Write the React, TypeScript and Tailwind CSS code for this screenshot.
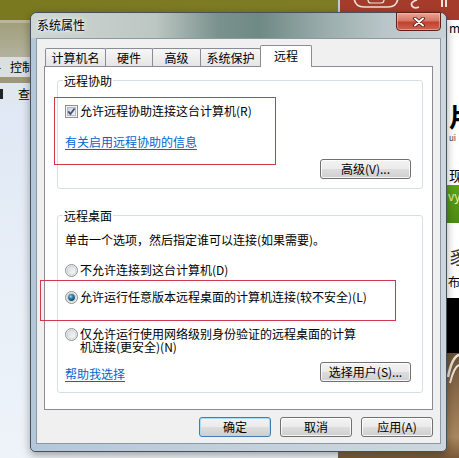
import React from "react";

function Checkbox() {
  return (
    <svg width="13" height="13" viewBox="0 0 13 13" className="shrink-0">
      <defs>
        <linearGradient id="cbg" x1="0" y1="0" x2="1" y2="1">
          <stop offset="0" stopColor="#cbcfd5" />
          <stop offset="1" stopColor="#f6f6f6" />
        </linearGradient>
      </defs>
      <rect x="0.5" y="0.5" width="12" height="12" fill="#f4f4f4" stroke="#8e8f8f" />
      <rect x="2.5" y="2.5" width="8" height="8" fill="url(#cbg)" stroke="#b4bac2" />
      <path d="M3.3 6.4 L5.4 9 L9.6 3.4" stroke="#3f4f7a" strokeWidth="1.7" fill="none" />
    </svg>
  );
}

function Radio({ checked }: { checked?: boolean }) {
  return (
    <svg width="13" height="13" viewBox="0 0 13 13" className="shrink-0">
      <defs>
        <linearGradient id="rbg" x1="0" y1="0" x2="1" y2="1">
          <stop offset="0" stopColor="#d6d8da" />
          <stop offset="1" stopColor="#fbfbfb" />
        </linearGradient>
        <radialGradient id="rdot" cx="0.4" cy="0.35" r="0.7">
          <stop offset="0" stopColor="#9fdcf4" />
          <stop offset="0.45" stopColor="#2b7ea6" />
          <stop offset="1" stopColor="#0c3d58" />
        </radialGradient>
      </defs>
      <circle cx="6.5" cy="6.5" r="6" fill="#f3f3f3" stroke="#8c8e90" />
      <circle cx="6.5" cy="6.5" r="4.4" fill="url(#rbg)" stroke="#c2c6ca" strokeWidth="0.8" />
      {checked && <circle cx="6.5" cy="6.5" r="3.4" fill="url(#rdot)" />}
    </svg>
  );
}

const btnBase =
  "h-[20px] rounded-[3px] border text-center leading-[18px] bg-[linear-gradient(to_bottom,#f3f3f3_0%,#ebebeb_48%,#dddddd_52%,#cfcfcf_100%)]";
const btnNormal = btnBase + " border-[#707070] shadow-[inset_0_0_0_1px_rgba(255,255,255,0.8)]";
const btnFocus = btnBase + " border-[#3c7fb1] shadow-[inset_0_0_0_1px_#a6def6]";

function Group({ title, children }: { title: string; children: React.ReactNode }) {
  return (
    <div className="relative rounded-[3px] border border-[#d5dfe5]">
      <span className="absolute left-[5px] top-[-7px] bg-white px-px leading-[14px]">{title}</span>
      {children}
    </div>
  );
}

export default function App() {
  return (
    <div className="relative h-[458px] w-[459px] overflow-hidden text-[12px] text-black [font-family:'Noto_Sans_CJK_SC','Noto_Sans',sans-serif]">
      {/* desktop background */}
      <div className="flex h-full">
        <div className="flex w-[338px] flex-col">
          <div className="h-[20px] bg-[linear-gradient(to_right,#7a7920,#7e7c24)]" />
          <div className="h-[3px] bg-[#b8b79a]" />
          <div className="h-[34px] bg-[linear-gradient(to_bottom,#a19f7b,#b3b29e)]" />
          <div className="flex h-[20px] items-center bg-[#dcdfdf] leading-[14px]">
            <span className="ml-[-4px] text-[10px]">▸</span>
            <span className="ml-[9px]">控制面板</span>
          </div>
          <div className="h-[6px] bg-[#9c9878]" />
          <div className="flex h-[21px] items-center bg-[#e0e7ef] leading-[14px]">
            <span className="ml-[-6px] h-[10px] w-[9px] bg-[#222]" />
            <span className="ml-[15px]">查看</span>
          </div>
          <div className="flex-1 bg-[linear-gradient(to_bottom,#dfe8f4,#e9f0f8_60%,#eef3f9)]" />
        </div>
        <div className="flex w-[121px] flex-col bg-white">
          <div className="h-[20px] border-l-2 border-[#b5cde0] bg-[#a53c2b]">
            <svg width="119" height="20" viewBox="0 0 119 20">
              <path d="M14 -4 Q14 7 24 7 L48 7 Q58 7 58 -4" stroke="#f3e0da" strokeWidth="1.6" fill="none" />
              <path d="M28 0 Q28 3 31 3 L41 3 Q44 3 44 0" stroke="#f3e0da" strokeWidth="1.2" fill="none" />
              <path d="M77 0 Q70 2 72 6 Q74 9 79 7" stroke="#f3e0da" strokeWidth="1.8" fill="none" />
              <rect x="101" y="0" width="2" height="7" fill="#f3e0da" />
              <rect x="105" y="0" width="2" height="7" fill="#f3e0da" />
            </svg>
          </div>
          <div className="flex h-[165px] flex-col overflow-hidden bg-white pl-[111px]">
            <span className="mt-[2px] h-[12px] text-[12px] leading-[12px]">mp</span>
            <span className="mt-[68px] h-[28px] text-[26px] font-bold leading-[28px]">片</span>
            <span className="mt-[4px] h-[8px] text-[8px] leading-[8px] text-[#444]">ui</span>
            <span className="mt-[25px] h-[16px] text-[14px] leading-[16px]">现</span>
          </div>
          <div className="h-[38px] overflow-hidden bg-[linear-gradient(to_bottom,#5fa11d,#4b8c12)] pl-[110px] pt-[4px] text-[12px] leading-[14px] text-[#e8f0a0]">
            vy
          </div>
          <div className="flex h-[75px] flex-col overflow-hidden bg-white pl-[110px]">
            <span className="mt-[23px] h-[20px] text-[18px] leading-[20px] text-[#333]">豸</span>
            <span className="mt-[10px] h-[12px] text-[12px] leading-[12px]">布</span>
          </div>
          <div className="h-[55px] bg-black" />
          <div className="flex-1 bg-[linear-gradient(to_bottom,#6b5236,#8c6c4a_40%,#a9875f_80%,#7a5a3a)]">
            <svg width="121" height="105" viewBox="0 0 121 105">
              <path d="M110 24 Q114 4 121 2" stroke="#e8e4dc" strokeWidth="2.5" fill="none" />
              <path d="M112 30 Q116 14 121 12" stroke="#e8e4dc" strokeWidth="2" fill="none" />
            </svg>
          </div>
        </div>
      </div>

      {/* dialog window */}
      <div className="absolute left-[30px] top-[12px] flex h-[440px] w-[417px] flex-col rounded-t-[7px] rounded-b-[5px] border border-[#45515b] bg-[linear-gradient(to_right,#b4c7da,#c3d0da_50%,#cdd6dc)] shadow-[0_3px_8px_rgba(0,0,0,0.35)]">
        <div className="flex h-[25px] items-start justify-between rounded-t-[6px] bg-[linear-gradient(to_right,#cfd7d5_0%,#bcc6c2_30%,#7a928d_45%,#6f8985_55%,#98abaa_70%,#b9c5c8_85%,#c7d1d6_100%)]">
          <span className="pl-[6px] pt-[5px] leading-[14px] [text-shadow:0_0_6px_rgba(255,255,255,0.95),0_0_3px_rgba(255,255,255,0.9)]">
            系统属性
          </span>
          <div className="mr-[5px] mt-[-1px] flex h-[19px] w-[45px] items-center justify-center rounded-b-[4px] border border-[#5e2118] bg-[linear-gradient(to_bottom,#e9a595_0%,#d87566_45%,#c2412f_55%,#d06450_100%)] shadow-[inset_0_0_0_1px_rgba(255,200,190,0.5)]">
            <svg width="12" height="10" viewBox="0 0 12 10">
              <path d="M2 1.5 L10 8.5 M10 1.5 L2 8.5" stroke="#4a1510" strokeWidth="3.6" strokeLinecap="round" />
              <path d="M2 1.5 L10 8.5 M10 1.5 L2 8.5" stroke="#ffffff" strokeWidth="2" strokeLinecap="round" />
            </svg>
          </div>
        </div>

        <div className="mx-[5px] mb-[7px] flex flex-1 flex-col border border-[#8b99a5] bg-[#f0f0f0] px-[7px] pt-[6px]">
          {/* tabs */}
          <div className="flex h-[21px] items-end pl-px">
            <div className="h-[18px] w-[61px] rounded-t-[2px] border-l border-r border-t border-[#898c95] bg-[linear-gradient(to_bottom,#f7f7f7,#e5e5e5)] text-center leading-[17px]">
              计算机名
            </div>
            <div className="-ml-px h-[18px] w-[48px] rounded-t-[2px] border-l border-r border-t border-[#898c95] bg-[linear-gradient(to_bottom,#f7f7f7,#e5e5e5)] text-center leading-[17px]">
              硬件
            </div>
            <div className="-ml-px h-[18px] w-[49px] rounded-t-[2px] border-l border-r border-t border-[#898c95] bg-[linear-gradient(to_bottom,#f7f7f7,#e5e5e5)] text-center leading-[17px]">
              高级
            </div>
            <div className="-ml-px h-[18px] w-[61px] rounded-t-[2px] border-l border-r border-t border-[#898c95] bg-[linear-gradient(to_bottom,#f7f7f7,#e5e5e5)] text-center leading-[17px]">
              系统保护
            </div>
            <div className="relative z-10 -mb-px -ml-px h-[22px] w-[52px] rounded-t-[2px] border-l border-r border-t border-[#898c95] bg-white text-center leading-[19px]">
              远程
            </div>
          </div>

          {/* panel */}
          <div className="flex h-[344px] flex-col border border-[#898c95] bg-white pl-[12px] pr-[9px] pt-[13px]">
            <Group title="远程协助">
              <div className="flex flex-col pb-[9px] pl-[7px] pr-[11px] pt-[23px]">
                <div className="flex h-[14px] items-center gap-[2px] leading-[14px]">
                  <Checkbox />
                  <span>允许远程协助连接这台计算机(R)</span>
                </div>
                <span className="mt-[17px] w-fit leading-[14px] text-[#0066cc] underline underline-offset-[2px]">
                  有关启用远程协助的信息
                </span>
                <div className="mt-[10px] flex justify-end">
                  <div className={btnNormal + " w-[91px]"}>高级(V)...</div>
                </div>
              </div>
            </Group>

            <div className="mt-[26px]">
              <Group title="远程桌面">
                <div className="flex flex-col pb-[10px] pl-[7px] pr-[11px] pt-[17px]">
                  <span className="leading-[14px]">单击一个选项，然后指定谁可以连接(如果需要)。</span>
                  <div className="mt-[16px] flex h-[14px] items-center gap-[2px] leading-[14px]">
                    <Radio />
                    <span>不允许连接到这台计算机(D)</span>
                  </div>
                  <div className="mt-[13px] flex h-[14px] items-center gap-[2px] leading-[14px]">
                    <Radio checked />
                    <span>允许运行任意版本远程桌面的计算机连接(较不安全)(L)</span>
                  </div>
                  <div className="mt-[23px] flex items-start gap-[2px]">
                    <div className="mt-px">
                      <Radio />
                    </div>
                    <span className="w-[282px] leading-[13px]">
                      仅允许运行使用网络级别身份验证的远程桌面的计算机连接(更安全)(N)
                    </span>
                  </div>
                  <div className="mt-[9px] flex items-end justify-between">
                    <span className="mb-px leading-[14px] text-[#0066cc] underline underline-offset-[2px]">帮助我选择</span>
                    <div className={btnNormal + " w-[91px]"}>选择用户(S)...</div>
                  </div>
                </div>
              </Group>
            </div>
          </div>

          {/* bottom buttons */}
          <div className="mt-[7px] flex justify-end gap-[9px]">
            <div className={btnFocus + " w-[72px]"}>确定</div>
            <div className={btnNormal + " w-[72px]"}>取消</div>
            <div className={btnNormal + " w-[72px]"}>应用(A)</div>
          </div>
        </div>
      </div>

      {/* red annotation boxes */}
      <div className="pointer-events-none absolute left-[54px] top-[97px] h-[68px] w-[222px] border border-[#cf3a4b]" />
      <div className="pointer-events-none absolute left-[40px] top-[280px] h-[41px] w-[356px] border border-[#cf3a4b]" />
    </div>
  );
}
